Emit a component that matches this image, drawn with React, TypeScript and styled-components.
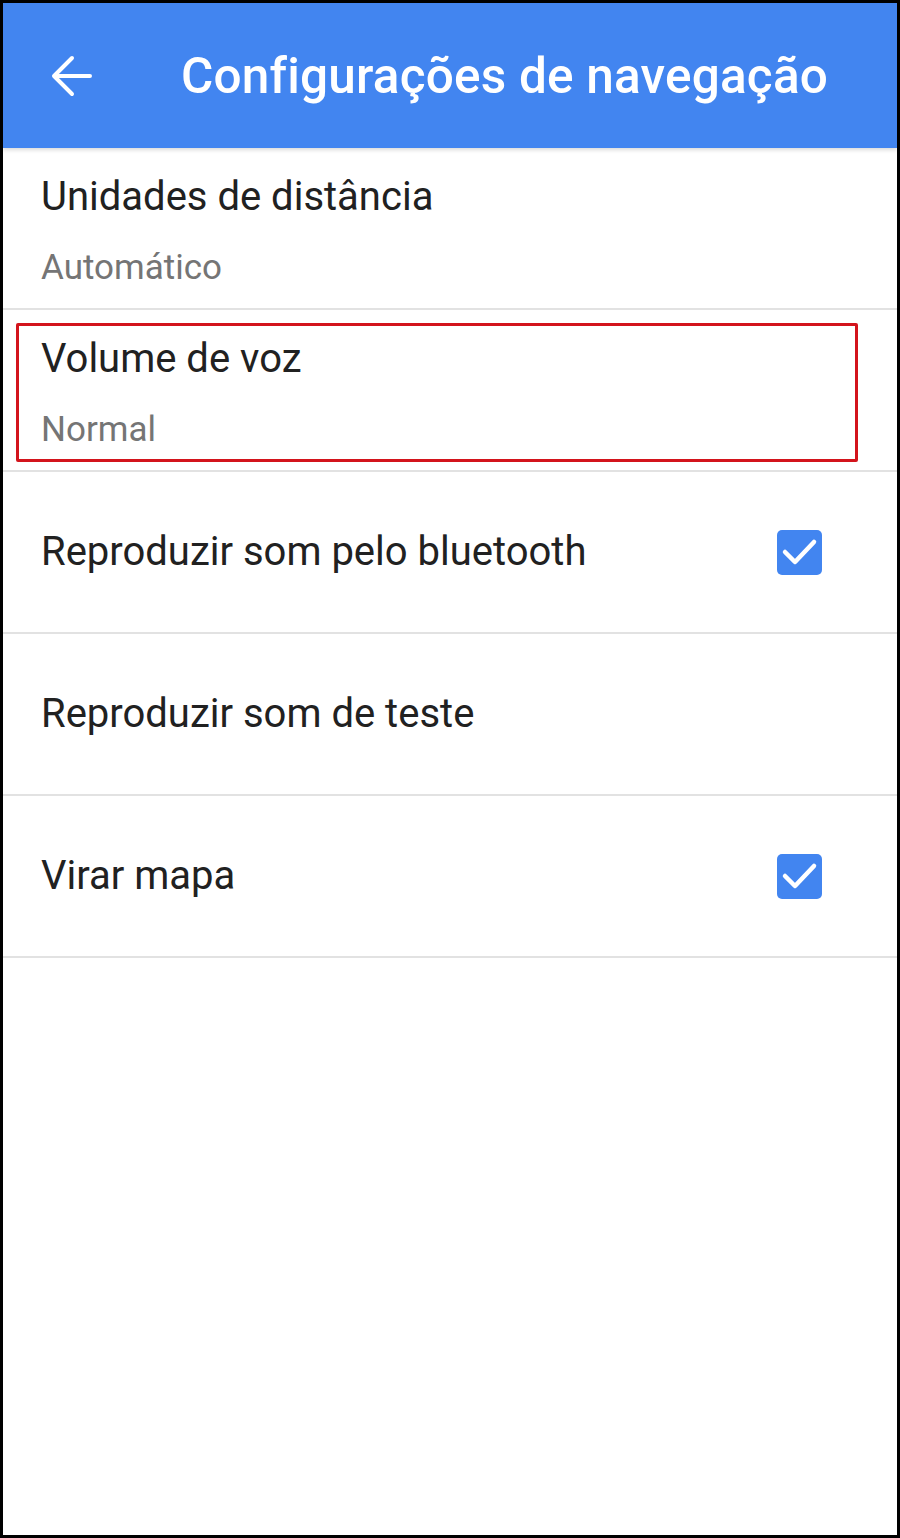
import styled, { createGlobalStyle } from "styled-components";

const GlobalStyle = createGlobalStyle`
  html, body {
    margin: 0;
    padding: 0;
    background: #ffffff;
  }
  * {
    box-sizing: border-box;
  }
`;

const Frame = styled.div`
  width: 900px;
  height: 1538px;
  border: 3px solid #000000;
  background: #ffffff;
  font-family: Roboto, "Noto Sans", sans-serif;
  display: flex;
  flex-direction: column;
  overflow: hidden;
`;

const AppBar = styled.header`
  height: 145px;
  background-color: #4285f0;
  display: flex;
  align-items: center;
  padding: 0 0 0 47px;
  box-shadow: 0 2px 4px rgba(0, 0, 0, 0.15);
  position: relative;
  z-index: 1;
  flex-shrink: 0;
`;

const BackButton = styled.button`
  width: 44px;
  height: 44px;
  border: none;
  background: transparent;
  padding: 0;
  display: flex;
  align-items: center;
  justify-content: center;
  cursor: pointer;
`;

const Title = styled.h1`
  margin: 0 0 0 87px;
  color: #ffffff;
  font-size: 49.5px;
  font-weight: 500;
  letter-spacing: 0.2px;
`;

const List = styled.div`
  display: flex;
  flex-direction: column;
`;

const Row = styled.div`
  height: 162px;
  border-bottom: 2px solid #e2e2e2;
  display: flex;
  align-items: center;
  justify-content: space-between;
  padding: 0 75px 0 38px;
`;

const TwoLine = styled.div<{ $highlight?: boolean }>`
  flex: 1;
  align-self: stretch;
  display: flex;
  flex-direction: column;
  gap: 27px;
  margin: ${(p) => (p.$highlight ? "13px -36px 8px -25px" : "0")};
  padding: ${(p) => (p.$highlight ? "9px 0 0 22px" : "25px 0 0 0")};
  border: ${(p) => (p.$highlight ? "3px solid #d3141c" : "none")};
  border-radius: 2px;
`;

const Label = styled.div`
  color: #212121;
  font-size: 40px;
  line-height: 48px;
`;

const Sub = styled.div`
  color: #757575;
  font-size: 35px;
  line-height: 40px;
`;

const Check = styled.div`
  width: 45px;
  height: 45px;
  border-radius: 5px;
  background: #4285f0;
  display: flex;
  align-items: center;
  justify-content: center;
`;

const ArrowIcon = () => (
  <svg width="44" height="44" viewBox="0 0 44 44" fill="none">
    <path
      d="M40 22H5M22 4L4 22l18 18"
      stroke="#ffffff"
      strokeWidth="4"
      strokeLinecap="round"
      strokeLinejoin="round"
    />
  </svg>
);

const CheckIcon = () => (
  <svg width="45" height="45" viewBox="0 0 45 45" fill="none">
    <path
      d="M8 22l10 10L37 12"
      stroke="#ffffff"
      strokeWidth="4.5"
      strokeLinecap="round"
      strokeLinejoin="round"
    />
  </svg>
);

type Item = {
  label: string;
  sub?: string;
  checked?: boolean;
  highlight?: boolean;
};

const items: Item[] = [
  { label: "Unidades de distância", sub: "Automático" },
  { label: "Volume de voz", sub: "Normal", highlight: true },
  { label: "Reproduzir som pelo bluetooth", checked: true },
  { label: "Reproduzir som de teste" },
  { label: "Virar mapa", checked: true },
];

export default function App() {
  return (
    <>
      <GlobalStyle />
      <Frame>
        <AppBar>
          <BackButton aria-label="Voltar">
            <ArrowIcon />
          </BackButton>
          <Title>Configurações de navegação</Title>
        </AppBar>
        <List>
          {items.map((item) => (
            <Row key={item.label}>
              {item.sub ? (
                <TwoLine $highlight={item.highlight}>
                  <Label>{item.label}</Label>
                  <Sub>{item.sub}</Sub>
                </TwoLine>
              ) : (
                <Label>{item.label}</Label>
              )}
              {item.checked && (
                <Check>
                  <CheckIcon />
                </Check>
              )}
            </Row>
          ))}
        </List>
      </Frame>
    </>
  );
}
